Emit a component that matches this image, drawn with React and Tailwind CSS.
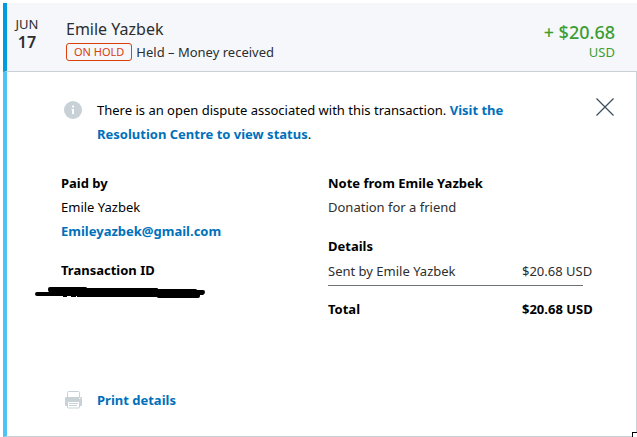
import { useState } from 'react';

const transaction = {
  month: 'JUN',
  day: '17',
  name: 'Emile Yazbek',
  email: 'Emileyazbek@gmail.com',
  status: 'ON HOLD',
  summary: 'Held – Money received',
  note: 'Donation for a friend',
  amount: '$20.68',
  currency: 'USD',
};

const InfoIcon = () => (
  <svg className="block size-[18px]" viewBox="0 0 18 18" aria-hidden="true">
    <circle cx="9" cy="9" r="9" fill="#c7d1d6" />
    <path d="M8 4.5h2v2H8zM7.5 8H10v5H8V9h-.5z" fill="#fff" />
  </svg>
);

const CloseIcon = () => (
  <svg className="block size-[18px]" viewBox="0 0 18 18" fill="none" stroke="#3d4e5a" strokeWidth="1.2" aria-hidden="true">
    <path d="M.5.5l17 17M17.5.5l-17 17" />
  </svg>
);

const PrinterIcon = () => (
  <svg className="block h-[18px] w-[17px]" viewBox="0 0 17 18" aria-hidden="true">
    <path d="M2.5 6V1.5q0-1 1-1h10q1 0 1 1V6" fill="#fff" stroke="#c7d1d6" />
    <path d="M1 6h15q1 0 1 1v7q0 1-1 1H1q-1 0-1-1V7q0-1 1-1z" fill="#c7d1d6" />
    <path d="M14 7.5h1.5" stroke="#fff" />
    <path d="M2.5 10.5h12v6q0 .5-.5.5H3q-.5 0-.5-.5z" fill="#fff" stroke="#c7d1d6" />
    <path d="M4 12.5h9M4 14.5h8" stroke="#c7d1d6" />
  </svg>
);

// Marker stroke drawn over the transaction id
const Redaction = () => (
  <svg className="absolute -left-[26px] top-[5px] h-3 w-[172px]" viewBox="0 0 172 12" aria-hidden="true">
    <path
      d="M13 2q0-2 2-2h35q2 0 2 1h70q1 0 1 1h37q2 0 2 1h6q2 0 2 2t-2 3h-3v1q0 2-2 2h-39q-2 0-2-1H42v-1H2Q0 9 0 7t2-2h12q-1 0-1-3z"
      fill="#000"
    />
    <path d="M28 9.5h4M36 9.5h5" stroke="#000" strokeWidth="1" />
  </svg>
);

const TransactionHeader = () => (
  <header className="flex h-[69px] border-b border-l-4 border-b-[#c7d1d6] border-l-[#009cde] bg-[#f5f7fa] text-[#2c2e2f]">
    <div className="ml-2 w-6 pt-3 text-center">
      <div className="text-[13px] leading-[18px]">{transaction.month}</div>
      <div className="text-base font-semibold leading-[18px]">{transaction.day}</div>
    </div>
    <div className="ml-[27px] grow pt-[15px]">
      <h1 className="text-base leading-[22px]">{transaction.name}</h1>
      <div className="mt-[3px] flex items-center text-[13px] leading-[18px]">
        <span className="mr-1 h-[18px] rounded-[3px] border border-[#d9400c] px-[7px] text-[11px] leading-4 text-[#d9400c]">
          {transaction.status}
        </span>
        <span>{transaction.summary}</span>
      </div>
    </div>
    <div className="mr-[22px] pt-[18px] text-right text-[#3c9e32]">
      <div className="text-lg font-medium leading-[22px]">+ {transaction.amount}</div>
      <div className="text-[13px] leading-[18px]">{transaction.currency}</div>
    </div>
  </header>
);

const Details = () => (
  <table className="w-full table-fixed text-left">
    <caption className="text-left font-bold text-black">Details</caption>
    <tbody>
      <tr className="h-[27px] border-b border-[#6c7378]">
        <td className="whitespace-nowrap">Sent by {transaction.name}</td>
        <td className="w-[61px] whitespace-nowrap">
          {transaction.amount} {transaction.currency}
        </td>
      </tr>
      <tr className="h-12 font-bold text-black">
        <th scope="row">Total</th>
        <td className="whitespace-nowrap">
          {transaction.amount} {transaction.currency}
        </td>
      </tr>
    </tbody>
  </table>
);

const App = () => {
  const [isOpen, setIsOpen] = useState(true);

  return (
    <main className="relative bg-white pl-[3px] pt-[3px] font-['Noto_Sans',sans-serif] text-[13px] leading-6 text-black">
      <TransactionHeader />

      {isOpen && (
        <section className="border-b border-l-4 border-r border-b-[#c7d1d6] border-l-[#4fc3f7] border-r-[#c7d1d6] pb-6 pl-[54px] pt-[26px]">
          <div className="flex items-start pr-[22px]">
            <div className="mr-[15px] mt-[3px] w-[21px] pl-[3px]">
              <InfoIcon />
            </div>
            <p className="max-w-[440px] grow">
              There is an open dispute associated with this transaction.{' '}
              <a href="#resolution" className="font-bold text-[#0070ba]">
                Visit the Resolution Centre to view status
              </a>
              .
            </p>
            <button
              type="button"
              aria-label="Close"
              className="ml-auto cursor-pointer"
              onClick={() => setIsOpen(false)}
            >
              <CloseIcon />
            </button>
          </div>

          <div className="mt-[25px] grid grid-cols-[267fr_255fr] pr-[53px]">
            <div>
              <h2 className="font-bold">Paid by</h2>
              <p>{transaction.name}</p>
              <a href="#email" className="font-bold text-[#0070ba]">
                {transaction.email}
              </a>
              <h2 className="mt-[15px] font-bold">Transaction ID</h2>
              <div className="relative h-6">
                <Redaction />
              </div>
            </div>
            <div className="text-[#2c2e2f]">
              <h2 className="font-bold text-black">Note from {transaction.name}</h2>
              <p className="mb-[15px]">{transaction.note}</p>
              <Details />
            </div>
          </div>

          <button
            type="button"
            className="mt-[55px] flex cursor-pointer items-center font-bold text-[#0070ba]"
          >
            <span className="mr-[15px] w-[21px] pl-1">
              <PrinterIcon />
            </span>
            Print details
          </button>
        </section>
      )}

      <div className="absolute bottom-0 right-0 size-[5px] border-l border-t border-black bg-white" />
    </main>
  );
};

export default App;
